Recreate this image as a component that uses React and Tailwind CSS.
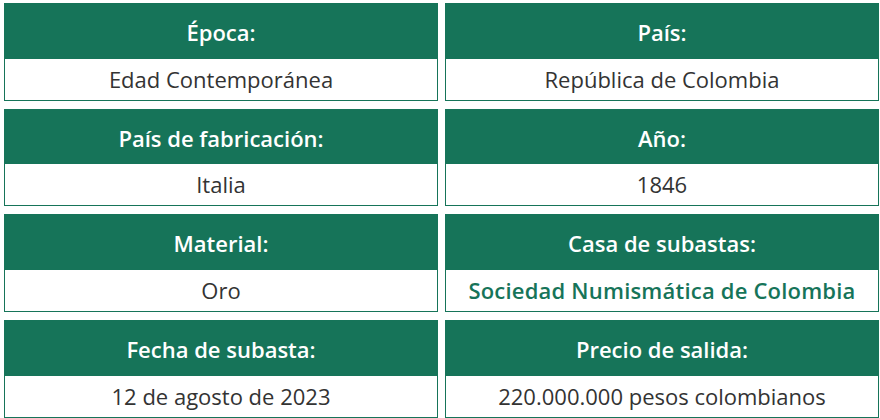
import React from 'react'

const items = [
  { label: 'Época:', value: 'Edad Contemporánea' },
  { label: 'País:', value: 'República de Colombia' },
  { label: 'País de fabricación:', value: 'Italia' },
  { label: 'Año:', value: '1846' },
  { label: 'Material:', value: 'Oro' },
  { label: 'Casa de subastas:', value: 'Sociedad Numismática de Colombia', link: true },
  { label: 'Fecha de subasta:', value: '12 de agosto de 2023' },
  { label: 'Precio de salida:', value: '220.000.000 pesos colombianos' },
]

function App() {
  return (
    <div className="w-[880px] h-[418px] bg-white overflow-hidden pt-[3px] pl-[4px] pr-[1px]" style={{ fontFamily: '"Open Sans", sans-serif' }}>
      <div className="grid grid-cols-2 gap-x-[7px] gap-y-[8px]">
        {items.map((item) => (
          <div key={item.label} className="flex flex-col h-[97.7px]">
            <div className="h-[55.7px] shrink-0 bg-[#167459] flex items-center justify-center text-white font-semibold text-[22px] pt-[3px]">
              {item.label}
            </div>
            <div className="flex-1 border border-t-0 border-[#167459] flex items-center justify-center text-[22px]">
              {item.link ? (
                <a href="#" className="text-[#167459] font-semibold tracking-[0.2px]">{item.value}</a>
              ) : (
                <span className="text-[#333333]">{item.value}</span>
              )}
            </div>
          </div>
        ))}
      </div>
    </div>
  )
}

export default App
